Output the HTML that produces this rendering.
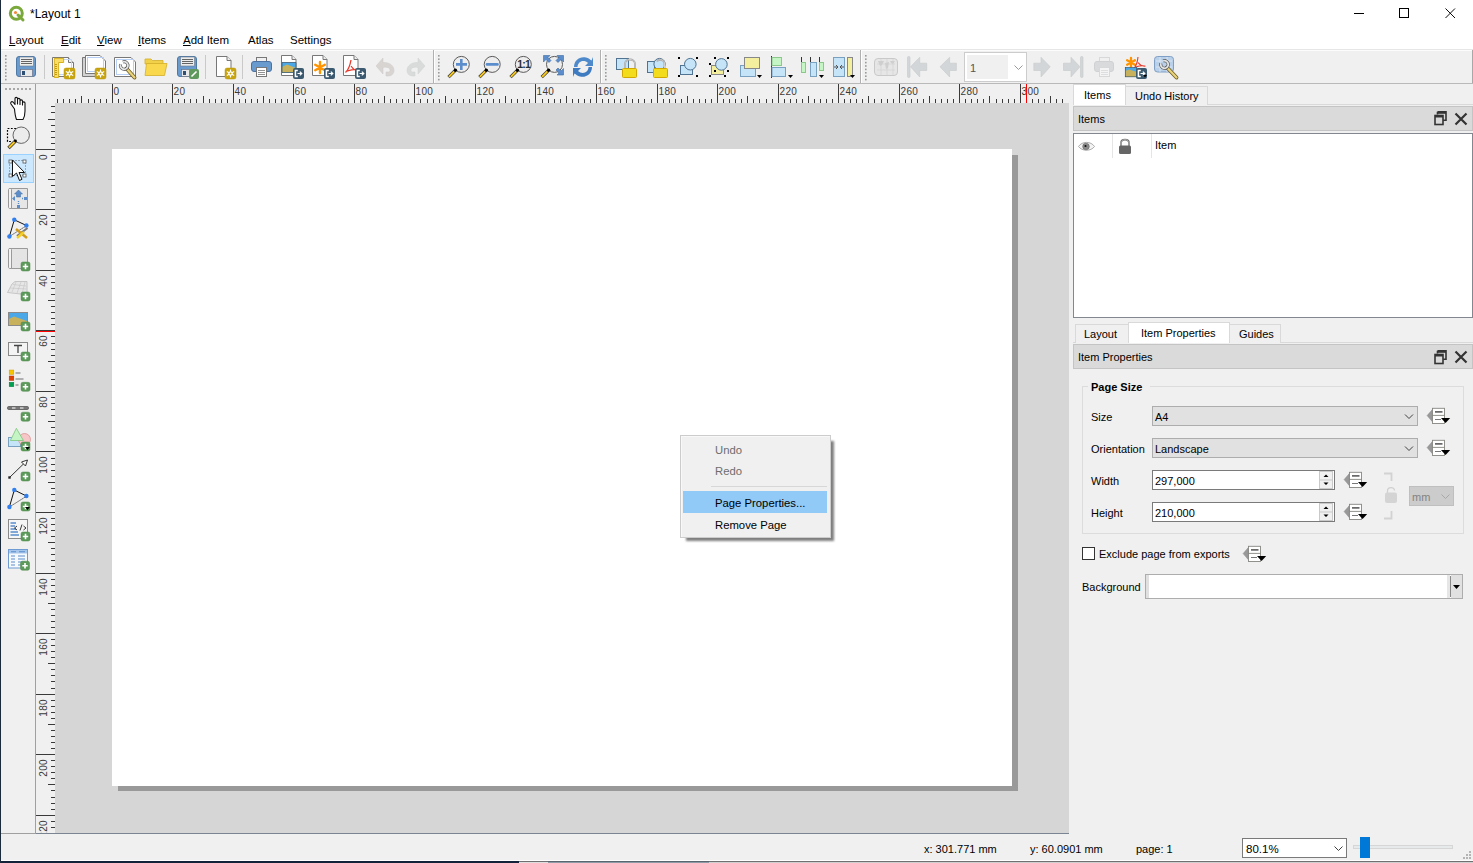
<!DOCTYPE html>
<html><head><meta charset="utf-8">
<style>
*{margin:0;padding:0;box-sizing:border-box}
html,body{width:1473px;height:863px;overflow:hidden;background:#f0f0f0;font-family:"Liberation Sans",sans-serif;font-size:11px;color:#000}
.a{position:absolute}
.t{position:absolute;white-space:pre;line-height:1}
svg{position:absolute;overflow:visible}
u{text-decoration:underline;text-underline-offset:1px}
</style></head><body>
<div class="a" style="left:0;top:0;width:1473px;height:49px;background:#fff"></div>
<div class="a" style="left:0;top:49px;width:1473px;height:1px;background:#e6e6e6"></div>
<div class="a" style="left:0;top:50px;width:1473px;height:1px;background:#fcfcfc"></div>
<div class="a" style="left:1472px;top:50px;width:1px;height:34px;background:#a8a8a8"></div>
<svg style="left:8px;top:5px" width="18" height="18" viewBox="0 0 18 18">
<circle cx="8.3" cy="8.3" r="6" fill="none" stroke="#7aa83a" stroke-width="3"/>
<path d="M10 10 L15 15" stroke="#7aa83a" stroke-width="3" stroke-linecap="round"/>
<circle cx="7.5" cy="7.5" r="1.6" fill="#f08a3b"/>
</svg>
<div class="t" style="left:30px;top:8px;font-size:12px">*Layout 1</div>
<div class="a" style="left:1354px;top:13px;width:10px;height:1px;background:#000"></div>
<div class="a" style="left:1399px;top:8px;width:10px;height:10px;border:1px solid #000"></div>
<svg style="left:1445px;top:8px" width="11" height="11" viewBox="0 0 11 11"><path d="M0.5 0.5L10 10M10 0.5L0.5 10" stroke="#000" stroke-width="0.95"/></svg>
<div class="t" style="left:9px;top:35px;font-size:11.5px"><u>L</u>ayout</div>
<div class="t" style="left:61px;top:35px;font-size:11.5px"><u>E</u>dit</div>
<div class="t" style="left:97px;top:35px;font-size:11.5px"><u>V</u>iew</div>
<div class="t" style="left:138px;top:35px;font-size:11.5px"><u>I</u>tems</div>
<div class="t" style="left:183px;top:35px;font-size:11.5px"><u>A</u>dd Item</div>
<div class="t" style="left:248px;top:35px;font-size:11.5px">Atlas</div>
<div class="t" style="left:290px;top:35px;font-size:11.5px">Settings</div>
<div class="a" style="left:0;top:83px;width:1473px;height:1px;background:#b9b9b9"></div>
<div class="a" style="left:35px;top:84px;width:1px;height:749px;background:#a0a0a0"></div>
<div class="a" style="left:1px;top:833px;width:35px;height:1px;background:#a0a0a0"></div>
<svg style="left:0;top:0" width="1473" height="863" viewBox="0 0 1473 863">
<rect x="36" y="84" width="1033" height="19" fill="#f0f0f0"/>
<rect x="36" y="103" width="19" height="730" fill="#f0f0f0"/>
<path d="M57.5 99V103M63.5 99V103M69.5 99V103M75.5 99V103M81.5 96V103M88.5 99V103M94.5 99V103M100.5 99V103M106.5 99V103M112.5 84V103M118.5 99V103M124.5 99V103M130.5 99V103M136.5 99V103M142.5 96V103M148.5 99V103M154.5 99V103M160.5 99V103M166.5 99V103M172.5 84V103M178.5 99V103M184.5 99V103M190.5 99V103M196.5 99V103M203.5 96V103M209.5 99V103M215.5 99V103M221.5 99V103M227.5 99V103M233.5 84V103M239.5 99V103M245.5 99V103M251.5 99V103M257.5 99V103M263.5 96V103M269.5 99V103M275.5 99V103M281.5 99V103M287.5 99V103M293.5 84V103M299.5 99V103M305.5 99V103M312.5 99V103M318.5 99V103M324.5 96V103M330.5 99V103M336.5 99V103M342.5 99V103M348.5 99V103M354.5 84V103M360.5 99V103M366.5 99V103M372.5 99V103M378.5 99V103M384.5 96V103M390.5 99V103M396.5 99V103M402.5 99V103M408.5 99V103M414.5 84V103M420.5 99V103M427.5 99V103M433.5 99V103M439.5 99V103M445.5 96V103M451.5 99V103M457.5 99V103M463.5 99V103M469.5 99V103M475.5 84V103M481.5 99V103M487.5 99V103M493.5 99V103M499.5 99V103M505.5 96V103M511.5 99V103M517.5 99V103M523.5 99V103M529.5 99V103M535.5 84V103M542.5 99V103M548.5 99V103M554.5 99V103M560.5 99V103M566.5 96V103M572.5 99V103M578.5 99V103M584.5 99V103M590.5 99V103M596.5 84V103M602.5 99V103M608.5 99V103M614.5 99V103M620.5 99V103M626.5 96V103M632.5 99V103M638.5 99V103M644.5 99V103M651.5 99V103M657.5 84V103M663.5 99V103M669.5 99V103M675.5 99V103M681.5 99V103M687.5 96V103M693.5 99V103M699.5 99V103M705.5 99V103M711.5 99V103M717.5 84V103M723.5 99V103M729.5 99V103M735.5 99V103M741.5 99V103M747.5 96V103M753.5 99V103M759.5 99V103M766.5 99V103M772.5 99V103M778.5 84V103M784.5 99V103M790.5 99V103M796.5 99V103M802.5 99V103M808.5 96V103M814.5 99V103M820.5 99V103M826.5 99V103M832.5 99V103M838.5 84V103M844.5 99V103M850.5 99V103M856.5 99V103M862.5 99V103M868.5 96V103M874.5 99V103M881.5 99V103M887.5 99V103M893.5 99V103M899.5 84V103M905.5 99V103M911.5 99V103M917.5 99V103M923.5 99V103M929.5 96V103M935.5 99V103M941.5 99V103M947.5 99V103M953.5 99V103M959.5 84V103M965.5 99V103M971.5 99V103M977.5 99V103M983.5 99V103M989.5 96V103M996.5 99V103M1002.5 99V103M1008.5 99V103M1014.5 99V103M1020.5 84V103M1026.5 99V103M1032.5 99V103M1038.5 99V103M1044.5 99V103M1050.5 96V103M1056.5 99V103M1062.5 99V103M51 106.5H55M51 112.5H55M48 119.5H55M51 125.5H55M51 131.5H55M51 137.5H55M51 143.5H55M36 149.5H55M51 155.5H55M51 161.5H55M51 167.5H55M51 173.5H55M48 179.5H55M51 185.5H55M51 191.5H55M51 197.5H55M51 203.5H55M36 209.5H55M51 215.5H55M51 221.5H55M51 227.5H55M51 234.5H55M48 240.5H55M51 246.5H55M51 252.5H55M51 258.5H55M51 264.5H55M36 270.5H55M51 276.5H55M51 282.5H55M51 288.5H55M51 294.5H55M48 300.5H55M51 306.5H55M51 312.5H55M51 318.5H55M51 324.5H55M36 330.5H55M51 336.5H55M51 343.5H55M51 349.5H55M51 355.5H55M48 361.5H55M51 367.5H55M51 373.5H55M51 379.5H55M51 385.5H55M36 391.5H55M51 397.5H55M51 403.5H55M51 409.5H55M51 415.5H55M48 421.5H55M51 427.5H55M51 433.5H55M51 439.5H55M51 445.5H55M36 451.5H55M51 458.5H55M51 464.5H55M51 470.5H55M51 476.5H55M48 482.5H55M51 488.5H55M51 494.5H55M51 500.5H55M51 506.5H55M36 512.5H55M51 518.5H55M51 524.5H55M51 530.5H55M51 536.5H55M48 542.5H55M51 548.5H55M51 554.5H55M51 560.5H55M51 566.5H55M36 573.5H55M51 579.5H55M51 585.5H55M51 591.5H55M51 597.5H55M48 603.5H55M51 609.5H55M51 615.5H55M51 621.5H55M51 627.5H55M36 633.5H55M51 639.5H55M51 645.5H55M51 651.5H55M51 657.5H55M48 663.5H55M51 669.5H55M51 675.5H55M51 681.5H55M51 688.5H55M36 694.5H55M51 700.5H55M51 706.5H55M51 712.5H55M51 718.5H55M48 724.5H55M51 730.5H55M51 736.5H55M51 742.5H55M51 748.5H55M36 754.5H55M51 760.5H55M51 766.5H55M51 772.5H55M51 778.5H55M48 784.5H55M51 790.5H55M51 797.5H55M51 803.5H55M51 809.5H55M36 815.5H55M51 821.5H55M51 827.5H55" stroke="#3a3a3a" stroke-width="1"/>
<clipPath id="vrc"><rect x="36" y="103" width="19" height="730"/></clipPath>
<g font-family="Liberation Sans" font-size="10" fill="#3a3a3a" letter-spacing="0.35"><text x="113.5" y="95">0</text><text x="173.5" y="95">20</text><text x="234.5" y="95">40</text><text x="294.5" y="95">60</text><text x="355.5" y="95">80</text><text x="415.5" y="95">100</text><text x="476.5" y="95">120</text><text x="536.5" y="95">140</text><text x="597.5" y="95">160</text><text x="658.5" y="95">180</text><text x="718.5" y="95">200</text><text x="779.5" y="95">220</text><text x="839.5" y="95">240</text><text x="900.5" y="95">260</text><text x="960.5" y="95">280</text><text x="1021.5" y="95">300</text></g>
<g font-family="Liberation Sans" font-size="10" fill="#3a3a3a" letter-spacing="0.35" clip-path="url(#vrc)"><text transform="translate(47 154) rotate(-90)" text-anchor="end">0</text><text transform="translate(47 214) rotate(-90)" text-anchor="end">20</text><text transform="translate(47 275) rotate(-90)" text-anchor="end">40</text><text transform="translate(47 335) rotate(-90)" text-anchor="end">60</text><text transform="translate(47 396) rotate(-90)" text-anchor="end">80</text><text transform="translate(47 456) rotate(-90)" text-anchor="end">100</text><text transform="translate(47 517) rotate(-90)" text-anchor="end">120</text><text transform="translate(47 578) rotate(-90)" text-anchor="end">140</text><text transform="translate(47 638) rotate(-90)" text-anchor="end">160</text><text transform="translate(47 699) rotate(-90)" text-anchor="end">180</text><text transform="translate(47 759) rotate(-90)" text-anchor="end">200</text><text transform="translate(47 820) rotate(-90)" text-anchor="end">220</text></g>
<path d="M1026.5 84V103M36 331.5H55" stroke="#ff0000" stroke-width="1"/>
</svg><div class="a" style="left:55px;top:103px;width:1014px;height:730px;background:#d6d6d6;overflow:hidden">
  <div class="a" style="left:63px;top:52px;width:900px;height:636px;background:#999"></div>
  <div class="a" style="left:57px;top:46px;width:900px;height:637px;background:#fff"></div>
</div>
<div class="a" style="left:36px;top:833px;width:1033px;height:1px;background:#7a8594"></div>
<!-- context menu -->
<div class="a" style="left:686px;top:441px;width:148px;height:100px;background:rgba(0,0,0,0.5);filter:blur(1.3px)"></div>
<div class="a" style="left:680px;top:435px;width:151px;height:103px;background:#f0f0f0;border:1px solid #cccccc;box-shadow:inset 1px 1px 0 #f8f8f8"></div>
<div class="a" style="left:711px;top:486px;width:116px;height:1px;background:#d7d7d7"></div>
<div class="a" style="left:683px;top:491px;width:144px;height:22px;background:#91c9f7"></div>
<div class="t" style="left:715px;top:445px;color:#6d6d6d;font-size:11.3px">Undo</div>
<div class="t" style="left:715px;top:466px;color:#6d6d6d;font-size:11.3px">Redo</div>
<div class="t" style="left:715px;top:498px;font-size:11.3px">Page Properties...</div>
<div class="t" style="left:715px;top:520px;font-size:11.3px">Remove Page</div>
<svg style="left:0;top:0" width="1473" height="90" viewBox="0 0 1473 90">

<!-- handles -->
<g fill="#9a9a9a"><rect x="5" y="55.0" width="1.6" height="1.6"/><rect x="5" y="58.4" width="1.6" height="1.6"/><rect x="5" y="61.8" width="1.6" height="1.6"/><rect x="5" y="65.2" width="1.6" height="1.6"/><rect x="5" y="68.6" width="1.6" height="1.6"/><rect x="5" y="72.0" width="1.6" height="1.6"/><rect x="5" y="75.4" width="1.6" height="1.6"/><rect x="5" y="78.8" width="1.6" height="1.6"/><rect x="438" y="55.0" width="1.6" height="1.6"/><rect x="438" y="58.4" width="1.6" height="1.6"/><rect x="438" y="61.8" width="1.6" height="1.6"/><rect x="438" y="65.2" width="1.6" height="1.6"/><rect x="438" y="68.6" width="1.6" height="1.6"/><rect x="438" y="72.0" width="1.6" height="1.6"/><rect x="438" y="75.4" width="1.6" height="1.6"/><rect x="438" y="78.8" width="1.6" height="1.6"/><rect x="605" y="55.0" width="1.6" height="1.6"/><rect x="605" y="58.4" width="1.6" height="1.6"/><rect x="605" y="61.8" width="1.6" height="1.6"/><rect x="605" y="65.2" width="1.6" height="1.6"/><rect x="605" y="68.6" width="1.6" height="1.6"/><rect x="605" y="72.0" width="1.6" height="1.6"/><rect x="605" y="75.4" width="1.6" height="1.6"/><rect x="605" y="78.8" width="1.6" height="1.6"/><rect x="865" y="55.0" width="1.6" height="1.6"/><rect x="865" y="58.4" width="1.6" height="1.6"/><rect x="865" y="61.8" width="1.6" height="1.6"/><rect x="865" y="65.2" width="1.6" height="1.6"/><rect x="865" y="68.6" width="1.6" height="1.6"/><rect x="865" y="72.0" width="1.6" height="1.6"/><rect x="865" y="75.4" width="1.6" height="1.6"/><rect x="865" y="78.8" width="1.6" height="1.6"/></g>
<!-- separators / toolbar ends -->
<path d="M44.5 55V79M205.5 55V79M242.5 55V79" stroke="#c9c9c9"/>
<path d="M433.5 50V83M600.5 50V83M860.5 50V83" stroke="#b0b0b0"/>
<path d="M434.5 50V83M601.5 50V83M861.5 50V83" stroke="#fff"/>

<!-- save -->
<rect x="16.5" y="56.5" width="19" height="20" rx="2.5" fill="#6a9bcf" stroke="#4f7aa6"/>
<rect x="19.5" y="57" width="14" height="9" fill="#ececec" stroke="#6a7a8a" stroke-width="0.6"/>
<path d="M21 59.5H32M21 61.5H32M21 63.5H32" stroke="#555" stroke-width="0.9"/>
<rect x="20.5" y="69.5" width="12" height="7" fill="#e8e8e8" stroke="#667" stroke-width="0.6"/>
<rect x="22" y="71" width="3" height="4" fill="#2f4f74"/>

<!-- new layout -->
<path d="M52.5 57.5H68.5L73.5 62.5V76.5H52.5Z" fill="#fff" stroke="#777"/>
<path d="M68.5 57.5V62.5H73.5" fill="#eee" stroke="#777"/>
<path d="M63 59.5H71.5V74.5H59" fill="none" stroke="#c0d4f5"/>
<path d="M54.3 58.3H63.6V62.5H58.6V77.5H54.3Z" fill="#f8dc64" stroke="#d2a90e" stroke-width="0.9"/>
<path d="M55 64.5H57M55 66.5H57M55 68.5H57M55 70.5H57M55 72.5H57M55 74.5H57" stroke="#b08a00" stroke-width="0.8"/>
<g transform="translate(64 68)"><rect x="0" y="0" width="11" height="11" rx="2" fill="#c8a40e" stroke="#b8940a" stroke-width="0.5"/><path d="M5.5 1.5V9.5M1.8 3.5L9.2 7.5M1.8 7.5L9.2 3.5" stroke="#fff" stroke-width="1.1"/><circle cx="5.5" cy="5.5" r="2.2" fill="#fff"/><circle cx="5.5" cy="5.5" r="1" fill="#c8a40e"/></g>

<!-- duplicate -->
<path d="M82.5 57.5H100V76.5H82.5Z" fill="#d2d2d2" stroke="#777"/>
<path d="M85.5 55.5H100L105.5 61V73.5H85.5Z" fill="#fff" stroke="#777"/>
<rect x="87.5" y="57.5" width="16" height="14" fill="none" stroke="#b8cff5" stroke-width="1"/>
<g transform="translate(95 68)"><rect x="0" y="0" width="11" height="11" rx="2" fill="#c8a40e" stroke="#b8940a" stroke-width="0.5"/><path d="M5.5 1.5V9.5M1.8 3.5L9.2 7.5M1.8 7.5L9.2 3.5" stroke="#fff" stroke-width="1.1"/><circle cx="5.5" cy="5.5" r="2.2" fill="#fff"/><circle cx="5.5" cy="5.5" r="1" fill="#c8a40e"/></g>

<!-- layout manager -->
<path d="M114.5 57.5H131L135.5 62V76.5H114.5Z" fill="#fff" stroke="#777"/>
<rect x="116.5" y="59.5" width="17" height="15" fill="none" stroke="#b8cff5"/>
<path d="M126.5 68.5L134.5 77.5" stroke="#6b5a20" stroke-width="3.8" stroke-linecap="round"/>
<path d="M126.5 68.5L134.5 77.5" stroke="#e8d27a" stroke-width="2.3" stroke-linecap="round"/>
<path d="M122.9 61.9A3.8 3.8 0 1 1 120.6 64.2" fill="none" stroke="#555" stroke-width="3.2"/>
<path d="M122.9 61.9A3.8 3.8 0 1 1 120.6 64.2" fill="none" stroke="#e4e4e4" stroke-width="1.8"/>

<!-- open folder -->
<path d="M145 59H151L152.5 60.5H163V64H145Z" fill="#f2d14a" stroke="#d4ae2a" stroke-width="0.8"/>
<path d="M145 75.5L146.5 63.5H167L164.5 75.5Z" fill="#f9d84e" stroke="#d4ae2a" stroke-width="0.8"/>

<!-- save as template -->
<rect x="177.5" y="56.5" width="19" height="20" rx="2.5" fill="#6a9bcf" stroke="#4f7aa6"/>
<rect x="180.5" y="57" width="14" height="9" fill="#ececec" stroke="#6a7a8a" stroke-width="0.6"/>
<path d="M182 59.5H193M182 61.5H193M182 63.5H193" stroke="#555" stroke-width="0.9"/>
<rect x="181.5" y="69.5" width="12" height="7" fill="#e8e8e8" stroke="#667" stroke-width="0.6"/>
<rect x="183" y="71" width="3" height="4" fill="#2f4f74"/>
<rect x="189" y="69" width="10" height="10" rx="2" fill="#5f9a5c"/>
<path d="M191.5 76.5L196.5 71.5" stroke="#fff" stroke-width="1.6"/>

<!-- new page -->
<g transform="translate(216 56)"><path d="M0.5 0.5H11L15 4.5V20.5H0.5Z" fill="#fff" stroke="#777" stroke-width="1"/><path d="M11 0.5V4.5H15" fill="#eee" stroke="#777" stroke-width="1"/></g>
<g transform="translate(225 68)"><rect x="0" y="0" width="11" height="11" rx="2" fill="#c8a40e" stroke="#b8940a" stroke-width="0.5"/><path d="M5.5 1.5V9.5M1.8 3.5L9.2 7.5M1.8 7.5L9.2 3.5" stroke="#fff" stroke-width="1.1"/><circle cx="5.5" cy="5.5" r="2.2" fill="#fff"/><circle cx="5.5" cy="5.5" r="1" fill="#c8a40e"/></g>

<!-- print -->
<rect x="256.5" y="57.5" width="10" height="6" fill="#f0f0f0" stroke="#777"/>
<rect x="251.5" y="61.5" width="20" height="10" rx="2.5" fill="#6a9bcf" stroke="#4b72a0"/>
<rect x="256.5" y="67.5" width="10" height="9" fill="#fff" stroke="#777"/>
<path d="M258 70.5H265M258 72.5H265M258 74.5H265" stroke="#777" stroke-width="0.8"/>

<!-- export image -->
<g transform="translate(281 55)"><path d="M0.5 0.5H11L15 4.5V20.5H0.5Z" fill="#fff" stroke="#777" stroke-width="1"/><path d="M11 0.5V4.5H15" fill="#eee" stroke="#777" stroke-width="1"/></g>
<rect x="282" y="62.5" width="14" height="10" fill="#4aa8e8"/>
<path d="M282 67L287 64.5L296 68V72.5H282Z" fill="#c7b15c"/>
<path d="M282 62.5H296V72.5H282Z" fill="none" stroke="#3b5a70" stroke-width="0.8"/>
<g transform="translate(293 68)"><rect x="0" y="0" width="11" height="11" rx="2" fill="#3b5a70"/><path d="M4.8 2.6H2.4V8.4H4.8" fill="none" stroke="#fff" stroke-width="1.5"/><path d="M4.5 5.5H8.6M6.8 3.6L8.8 5.5L6.8 7.4" fill="none" stroke="#fff" stroke-width="1.2"/></g>
<!-- export svg -->
<g transform="translate(312 55)"><path d="M0.5 0.5H11L15 4.5V20.5H0.5Z" fill="#fff" stroke="#777" stroke-width="1"/><path d="M11 0.5V4.5H15" fill="#eee" stroke="#777" stroke-width="1"/></g>
<path d="M320 62V73M315.2 64.75L324.8 70.25M315.2 70.25L324.8 64.75" stroke="#ff9400" stroke-width="2.4" stroke-linecap="round"/>
<g transform="translate(324 68)"><rect x="0" y="0" width="11" height="11" rx="2" fill="#3b5a70"/><path d="M4.8 2.6H2.4V8.4H4.8" fill="none" stroke="#fff" stroke-width="1.5"/><path d="M4.5 5.5H8.6M6.8 3.6L8.8 5.5L6.8 7.4" fill="none" stroke="#fff" stroke-width="1.2"/></g>
<!-- export pdf -->
<g transform="translate(343 55)"><path d="M0.5 0.5H11L15 4.5V20.5H0.5Z" fill="#fff" stroke="#777" stroke-width="1"/><path d="M11 0.5V4.5H15" fill="#eee" stroke="#777" stroke-width="1"/></g>
<path d="M351 60C350 66 348 70 345.5 72.5M351 66C353 69 356 71 359 71M347 71C351 70 354 69 356 70" fill="none" stroke="#e8392c" stroke-width="1.3"/>
<g transform="translate(355 68)"><rect x="0" y="0" width="11" height="11" rx="2" fill="#3b5a70"/><path d="M4.8 2.6H2.4V8.4H4.8" fill="none" stroke="#fff" stroke-width="1.5"/><path d="M4.5 5.5H8.6M6.8 3.6L8.8 5.5L6.8 7.4" fill="none" stroke="#fff" stroke-width="1.2"/></g>

<!-- undo / redo -->
<path d="M376 66L383 58V62.5C390 62 394 66 394 70.5C394 74 391.5 76 388 76H386V72H388C389.5 72 390 71 390 70.2C390 68 387 66.5 383 67.5V74Z" fill="#d7d4d2" stroke="#cfcac8" stroke-width="0.5"/>
<path d="M425 66L418 58V62.5C411 62 407 66 407 70.5C407 74 409.5 76 413 76H415V72H413C411.5 72 411 71 411 70.2C411 68 414 66.5 418 67.5V74Z" fill="#d8dbd9" stroke="#cfd2d0" stroke-width="0.5"/>

<!-- zoom in/out/1:1 -->
<g transform="translate(461.3 64.4)"><circle cx="0" cy="0" r="8" fill="#ededed" stroke="#5a5a5a" stroke-width="1"/><path d="M-6.5 6.5L-12.8 12.8" stroke="#3a3a3a" stroke-width="3.2" stroke-linecap="butt"/><path d="M-6.8 6.8L-12.4 12.4" stroke="#f9c91c" stroke-width="1.9"/><circle cx="-5.9" cy="5.9" r="1.7" fill="#000"/></g>
<path d="M456 64.4H467M461.3 59V70" stroke="#5b8dcc" stroke-width="2.6"/>
<g transform="translate(492.2 64.4)"><circle cx="0" cy="0" r="8" fill="#ededed" stroke="#5a5a5a" stroke-width="1"/><path d="M-6.5 6.5L-12.8 12.8" stroke="#3a3a3a" stroke-width="3.2" stroke-linecap="butt"/><path d="M-6.8 6.8L-12.4 12.4" stroke="#f9c91c" stroke-width="1.9"/><circle cx="-5.9" cy="5.9" r="1.7" fill="#000"/></g>
<path d="M487 64.4H497.5" stroke="#5b8dcc" stroke-width="2.6" stroke-linecap="round"/>
<g transform="translate(523.3 64.4)"><circle cx="0" cy="0" r="8" fill="#ededed" stroke="#5a5a5a" stroke-width="1"/><path d="M-6.5 6.5L-12.8 12.8" stroke="#3a3a3a" stroke-width="3.2" stroke-linecap="butt"/><path d="M-6.8 6.8L-12.4 12.4" stroke="#f9c91c" stroke-width="1.9"/><circle cx="-5.9" cy="5.9" r="1.7" fill="#000"/></g>
<text x="523.6" y="68.3" font-family="Liberation Sans" font-weight="bold" font-size="10.5" text-anchor="middle" fill="#2a2f33" letter-spacing="-0.8">1:1</text>
<!-- zoom full -->
<g transform="translate(554.5 64.4)"><circle cx="0" cy="0" r="8" fill="#ededed" stroke="#5a5a5a" stroke-width="1"/><path d="M-6.5 6.5L-12.8 12.8" stroke="#3a3a3a" stroke-width="3.2" stroke-linecap="butt"/><path d="M-6.8 6.8L-12.4 12.4" stroke="#f9c91c" stroke-width="1.9"/><circle cx="-5.9" cy="5.9" r="1.7" fill="#000"/></g>
<path d="M543.5 55.5H550L548 57.5L551 60.5L549 62.5L546 59.5L543.5 62Z M563.5 55.5H557L559 57.5L556 60.5L558 62.5L561 59.5L563.5 62Z M563.5 75H557L559 73L556 70L558 68L561 71L563.5 68.5Z" fill="#5b8dcc" stroke="#3d6a9e" stroke-width="0.6"/>
<!-- refresh -->
<path d="M574 67C574 60 580 56 586 57.5C588.5 58 590 59.5 591.5 60.5L593 57V66H585L588 63C586 61 583 60.5 581 61.5C578.5 62.5 577.5 65 577.5 67Z" fill="#4e8acb"/>
<path d="M592 67C592 74 586 78 580 76.5C577.5 76 576 74.5 574.5 73.5L573 77V68H581L578 71C580 73 583 73.5 585 72.5C587.5 71.5 588.5 69 588.5 67Z" fill="#3f7bc0"/>

<!-- lock -->
<rect x="616.5" y="58.5" width="12" height="11" fill="#c6e4f8" stroke="#4f7391"/>
<path d="M625 68.5V64C625 58 635 58 635 64V68.5" fill="none" stroke="#999" stroke-width="1.8"/>
<path d="M625 68.5V64C625 58 635 58 635 64V68.5" fill="none" stroke="#ddd" stroke-width="0.8"/>
<rect x="622.5" y="68.5" width="14" height="9" rx="1" fill="#f2dc1c" stroke="#d2a800"/>
<!-- unlock -->
<rect x="647.5" y="61.5" width="7" height="11" fill="#c6e4f8" stroke="#4f7391"/>
<circle cx="659.5" cy="64" r="5.6" fill="#c6e4f8" stroke="#4f7391"/>
<path d="M657 61.5C658 59 664 59 664.5 63V68.5" fill="none" stroke="#999" stroke-width="1.8"/>
<path d="M657 61.5C658 59 664 59 664.5 63V68.5" fill="none" stroke="#ddd" stroke-width="0.8"/>
<rect x="653.5" y="68.5" width="14" height="9" rx="1" fill="#f2dc1c" stroke="#d2a800"/>
<!-- group -->
<rect x="680.5" y="65.5" width="12" height="9" fill="#c6e4f8" stroke="#4f7391"/>
<circle cx="690.3" cy="64.2" r="5.8" fill="#c6e4f8" stroke="#4f7391"/>
<g fill="#000"><rect x="678" y="57" width="2" height="2"/><rect x="696" y="57" width="2" height="2"/><rect x="678" y="75" width="2" height="2"/><rect x="696" y="75" width="2" height="2"/></g>
<!-- ungroup -->
<rect x="711.5" y="65.5" width="12" height="9" fill="#f3ef9f" stroke="#888"/>
<circle cx="721.4" cy="64.4" r="5.8" fill="#c6e4f8" stroke="#4f7391"/>
<g fill="#000"><rect x="714" y="57" width="2" height="2"/><rect x="727" y="57" width="2" height="2"/><rect x="709" y="63" width="2" height="2"/><rect x="714" y="70" width="2" height="2"/><rect x="727" y="70" width="2" height="2"/><rect x="709" y="75" width="2" height="2"/><rect x="724" y="75" width="2" height="2"/></g>
<!-- raise -->
<rect x="740.5" y="65.5" width="15" height="11" fill="#c6e4f8" stroke="#7aa0bf"/>
<rect x="744.5" y="57.5" width="15" height="11" fill="#f3ef9f" stroke="#888"/>
<g transform="translate(757 75)"><path d="M0 0H5L2.5 3Z" fill="#000"/></g>
<!-- align -->
<path d="M771.5 56V78" stroke="#333"/>
<rect x="772" y="57.5" width="9.5" height="8" fill="#c5f5c5" stroke="#8cc88c"/>
<rect x="772" y="67.5" width="13.5" height="9" fill="#c6e4f8" stroke="#7aa0bf"/>
<g transform="translate(788 75)"><path d="M0 0H5L2.5 3Z" fill="#000"/></g>
<!-- distribute -->
<path d="M801.5 57V65M810.5 57V65M819.5 57V65" stroke="#333"/>
<rect x="801.5" y="62.5" width="4" height="10" fill="#c5f5c5" stroke="#8cc88c"/>
<rect x="810.5" y="62.5" width="6" height="14" fill="#c6e4f8" stroke="#7aa0bf"/>
<rect x="819.5" y="62.5" width="4" height="8" fill="#c5f5c5" stroke="#8cc88c"/>
<g transform="translate(819 75)"><path d="M0 0H5L2.5 3Z" fill="#000"/></g>
<!-- resize -->
<rect x="833.5" y="57.5" width="11" height="19" fill="#c6e4f8" stroke="#7aa0bf"/>
<path d="M834 67H837M836 65L838 67L836 69M844 67H841M842 65L840 67L842 69" fill="none" stroke="#555" stroke-width="1"/>
<rect x="847.5" y="57.5" width="5" height="19" fill="#f3ef9f" stroke="#888"/>
<g transform="translate(850 75)"><path d="M0 0H5L2.5 3Z" fill="#000"/></g>

<!-- atlas preview -->
<rect x="874.5" y="58.5" width="23" height="17" rx="3.5" fill="#e6e6e6" stroke="#c9c9c9"/>
<path d="M877 64H895M877 70H895M881 59V75M887 59V75M893 59V75" stroke="#d2d2d2" stroke-width="0.6"/>
<path d="M878 61H884L882 65L880 66ZM885 63L889 62L888 68L886 69ZM890 61H895L893 64L891 63Z" fill="#cfcfcf"/>
<!-- first -->
<rect x="907.5" y="56.5" width="2.5" height="21" rx="1" fill="#d3d6d8" stroke="#c6c9cb" stroke-width="0.6"/>
<path d="M910.5 66.8L919.7 57.3V63.2H926.7V70.5H919.7V76.9Z" fill="#d3d6d8" stroke="#c6c9cb" stroke-width="0.6"/>
<!-- prev -->
<path d="M940 66.8L949.6 57.3V63.2H956.4V70.5H949.6V76.9Z" fill="#d3d6d8" stroke="#c6c9cb" stroke-width="0.6"/>
<!-- combo -->
<rect x="964.5" y="52.5" width="62" height="29" fill="#fff" stroke="#cccccc"/>
<rect x="967" y="55" width="41" height="24" fill="#f0f0f0"/>
<text x="970" y="71.5" font-family="Liberation Sans" font-size="11" fill="#555">1</text>
<path d="M1014.5 65.5L1018.5 69.5L1022.5 65.5" fill="none" stroke="#9a9a9a"/>
<!-- next / last -->
<path d="M1050.2 66.8L1041 57.3V63.2H1033.8V70.5H1041V76.9Z" fill="#d3d6d8" stroke="#c6c9cb" stroke-width="0.6"/>
<path d="M1080 66.8L1071 57.3V63.2H1063.5V70.5H1071V76.9Z" fill="#d3d6d8" stroke="#c6c9cb" stroke-width="0.6"/>
<rect x="1080.5" y="56.5" width="2.5" height="21" rx="1" fill="#d3d6d8" stroke="#c6c9cb" stroke-width="0.6"/>
<!-- atlas print -->
<rect x="1099.5" y="57.5" width="10" height="6" fill="#f0f0f0" stroke="#d6d8da"/>
<rect x="1094.5" y="61.5" width="19" height="10" rx="2.5" fill="#d9dadb" stroke="#cfd1d3"/>
<rect x="1099.5" y="67.5" width="10" height="9" fill="#f4f4f4" stroke="#d6d8da"/>
<path d="M1101 70.5H1108M1101 72.5H1108M1101 74.5H1108" stroke="#d6d8da" stroke-width="0.8"/>
<!-- atlas export -->
<path d="M1131 58V67M1127.1 60.25L1134.9 64.75M1127.1 64.75L1134.9 60.25" stroke="#ff9400" stroke-width="2.3" stroke-linecap="round"/>
<path d="M1138 57C1137.5 62 1136 66 1134 68.5M1138 62.5C1140 65 1143 66.5 1145.5 66M1135.5 67C1139 66 1142 65.5 1144 66" fill="none" stroke="#e8392c" stroke-width="1.1"/>
<rect x="1125" y="67.5" width="12" height="9.5" fill="#4aa8e8"/>
<path d="M1125 71L1129 69.5L1137 72V77H1125Z" fill="#c7b15c"/>
<rect x="1125.3" y="67.5" width="11.5" height="9.3" fill="none" stroke="#3b5a70" stroke-width="0.7"/>
<g transform="translate(1136 68)"><rect x="0" y="0" width="11" height="11" rx="2" fill="#3b5a70"/><path d="M4.8 2.6H2.4V8.4H4.8" fill="none" stroke="#fff" stroke-width="1.5"/><path d="M4.5 5.5H8.6M6.8 3.6L8.8 5.5L6.8 7.4" fill="none" stroke="#fff" stroke-width="1.2"/></g>
<path d="M1143 75H1147L1145 77.5Z" fill="#000"/>
<!-- atlas settings -->
<rect x="1154.5" y="56.5" width="19" height="15.5" rx="3" fill="#b9d0ea" stroke="#7f9fc4"/>
<path d="M1156 61H1172M1156 67H1172M1160 57V72M1167 57V72" stroke="#e0ebf7" stroke-width="0.8"/>
<path d="M1167 67.5L1176.5 77.5" stroke="#6b5a20" stroke-width="3.8" stroke-linecap="round"/>
<path d="M1167 67.5L1176.5 77.5" stroke="#e8d27a" stroke-width="2.3" stroke-linecap="round"/>
<path d="M1163.2 60.9A3.8 3.8 0 1 1 1160.9 63.2" fill="none" stroke="#555" stroke-width="3.2"/>
<path d="M1163.2 60.9A3.8 3.8 0 1 1 1160.9 63.2" fill="none" stroke="#e4e4e4" stroke-width="1.8"/>
</svg>
<div class="a" style="left:3px;top:154px;width:31px;height:29px;background:#cce8ff;border:1px solid #99d1ff"></div>
<svg style="left:0;top:0" width="40" height="600" viewBox="0 0 40 600">

<g fill="#a8a8a8"><rect x="5" y="88" width="2" height="2"/><rect x="9" y="88" width="2" height="2"/><rect x="13" y="88" width="2" height="2"/><rect x="17" y="88" width="2" height="2"/><rect x="21" y="88" width="2" height="2"/><rect x="25" y="88" width="2" height="2"/><rect x="29" y="88" width="2" height="2"/></g>
<!-- hand -->
<path d="M14.5 109L11 104C10 102.5 11.5 101 13 102L15 104.5V98.5C15 97 17.5 97 17.5 98.5V104V99.5C17.5 98 20 98 20 99.5V104.5V101C20 99.5 22.5 99.5 22.5 101V105V103C22.5 101.5 25 101.5 25 103V111C25 114 24.5 117 23 119.5H16.5C15.5 117 15 115 14.5 109Z" fill="#fff" stroke="#111" stroke-width="1.1" stroke-linejoin="round"/>
<!-- zoom -->
<path d="M16 128.5H7.5V141.5H12" fill="none" stroke="#000" stroke-width="1.2" stroke-dasharray="1.8 1.5"/>
<circle cx="21.2" cy="135.2" r="8.2" fill="#ececec" stroke="#666" stroke-width="1"/>
<path d="M15.5 141L8.5 148" stroke="#333" stroke-width="3.4"/>
<path d="M15 141.5L9 147.5" stroke="#f7c61a" stroke-width="1.9"/>
<circle cx="15.5" cy="141" r="1.4" fill="#000"/>
<!-- select -->
<rect x="9.5" y="160.5" width="16" height="15" fill="none" stroke="#444" stroke-dasharray="1 2" stroke-width="0.8"/>
<rect x="9" y="160" width="3" height="3" fill="#fff" stroke="#555" stroke-width="0.8"/><rect x="23" y="160" width="3" height="3" fill="#fff" stroke="#555" stroke-width="0.8"/><rect x="9" y="174" width="3" height="3" fill="#fff" stroke="#555" stroke-width="0.8"/><rect x="23" y="174" width="3" height="3" fill="#fff" stroke="#555" stroke-width="0.8"/>
<path d="M12.5 160V176.5L16.5 173L19.5 180.5L22 179.3L19 172.5H24.5Z" fill="#fff" stroke="#111" stroke-width="1" stroke-linejoin="round"/>
<!-- move content -->
<path d="M10.5 188.5H27.5V208.5H10.5Z" fill="#e6e6e6" stroke="#999"/>
<path d="M8.5 189.5C8.5 188 11.5 188 11.5 189.5V208.5H10C9 208.5 8.5 208 8.5 207Z" fill="#f4f4f4" stroke="#999"/>
<path d="M18.5 190L22.5 194H20.5V197H16.5V194H14.5Z" fill="#5b8dcc" stroke="#3d6a9e" stroke-width="0.5"/>
<path d="M12 198.5L15 196V201L12 198.5Z" fill="#5b8dcc"/><rect x="24" y="197" width="3" height="3" fill="#5b8dcc"/><rect x="17" y="205" width="3" height="3" fill="#5b8dcc"/>
<path d="M13 199H15M22 198.5H24M18.5 201V204" stroke="#5b8dcc" stroke-width="1.4" stroke-dasharray="1 1"/>
<!-- edit nodes -->
<path d="M14.3 219.8L26.4 225.5M14.3 219.8L9.4 236.5" stroke="#111" stroke-width="1"/>
<path d="M9.4 236.5L26 226" stroke="#111" stroke-width="1" stroke-dasharray="1.2 1.2"/>
<path d="M17 236L27.5 228" stroke="#777" stroke-width="2.2"/>
<path d="M16 229L27 238" stroke="#d19b1a" stroke-width="2.5"/>
<path d="M17 238L24 232" stroke="#f2cf2a" stroke-width="2.4"/>
<circle cx="14.3" cy="219.8" r="2.2" fill="#2f7ff0"/><circle cx="26.4" cy="225.5" r="2.2" fill="#2f7ff0"/><circle cx="9.4" cy="236.5" r="2.2" fill="#2f7ff0"/>
<!-- add map -->
<path d="M10.5 248.5H27.5V268.5H10.5Z" fill="#e4e4e4" stroke="#9a9a9a"/>
<path d="M8.5 249.5C8.5 248 11.5 248 11.5 249.5V268.5H10C9 268.5 8.5 268 8.5 267Z" fill="#f4f4f4" stroke="#9a9a9a"/>
<g transform="translate(21 262)"><rect x="0" y="0" width="9" height="9" rx="1.8" fill="#5c9a5a" stroke="#4d874b" stroke-width="0.5"/><path d="M4.5 1.8V7.2M1.8 4.5H7.2" stroke="#fff" stroke-width="1.6"/></g>
<!-- add 3d map -->
<path d="M7.5 292.5L12 284L15 281.5H27V293L25 294.5Z" fill="#e6e6e6" stroke="#bdbdbd" stroke-width="0.8"/>
<path d="M10 288L26 289M13 284.5L26 286M12 292L16 282M17 293L21 282M22 294L25 282" stroke="#c4c4c4" stroke-width="0.6"/>
<g transform="translate(21 292)"><rect x="0" y="0" width="9" height="9" rx="1.8" fill="#5c9a5a" stroke="#4d874b" stroke-width="0.5"/><path d="M4.5 1.8V7.2M1.8 4.5H7.2" stroke="#fff" stroke-width="1.6"/></g>
<!-- add picture -->
<rect x="8.5" y="312.5" width="19" height="13" fill="#4aa8e8" stroke="#8a8a8a"/>
<path d="M9 319L14 316.5L27 321V325H9Z" fill="#c7b15c"/>
<g transform="translate(21 322)"><rect x="0" y="0" width="9" height="9" rx="1.8" fill="#5c9a5a" stroke="#4d874b" stroke-width="0.5"/><path d="M4.5 1.8V7.2M1.8 4.5H7.2" stroke="#fff" stroke-width="1.6"/></g>
<!-- add label -->
<rect x="8.5" y="342.5" width="19" height="13" fill="#f4f4f4" stroke="#888"/>
<path d="M14 345.5H22M18 345.5V353" stroke="#444" stroke-width="1.3"/>
<g transform="translate(21 352)"><rect x="0" y="0" width="9" height="9" rx="1.8" fill="#5c9a5a" stroke="#4d874b" stroke-width="0.5"/><path d="M4.5 1.8V7.2M1.8 4.5H7.2" stroke="#fff" stroke-width="1.6"/></g>
<!-- legend -->
<rect x="9.2" y="370" width="4.6" height="4.4" fill="#f7c400" stroke="#d19a00" stroke-width="0.5"/>
<rect x="9.2" y="376" width="4.6" height="4.4" fill="#e04000" stroke="#b03000" stroke-width="0.5"/>
<rect x="9.2" y="382.3" width="4.6" height="4.4" fill="#00a050" stroke="#007a3a" stroke-width="0.5"/>
<path d="M15.5 373H20.5M15.5 379H23.5M15.5 385H18.5" stroke="#999" stroke-width="1.3"/>
<g transform="translate(21 382.3)"><rect x="0" y="0" width="9" height="9" rx="1.8" fill="#5c9a5a" stroke="#4d874b" stroke-width="0.5"/><path d="M4.5 1.8V7.2M1.8 4.5H7.2" stroke="#fff" stroke-width="1.6"/></g>
<!-- scalebar -->
<rect x="7.5" y="406.5" width="21" height="3" rx="1.2" fill="#777" stroke="#555" stroke-width="0.8"/>
<path d="M12 408H15.5M20 408H23.5" stroke="#fff" stroke-width="1"/>
<g transform="translate(21 412.2)"><rect x="0" y="0" width="9" height="9" rx="1.8" fill="#5c9a5a" stroke="#4d874b" stroke-width="0.5"/><path d="M4.5 1.8V7.2M1.8 4.5H7.2" stroke="#fff" stroke-width="1.6"/></g>
<!-- shape -->
<rect x="8.5" y="437.5" width="12" height="9" fill="#c6e4f8" stroke="#7aa0bf"/>
<circle cx="24.5" cy="439.5" r="6" fill="#f7c6c6" stroke="#d98a8a" stroke-width="0.7"/>
<path d="M16.4 428.3L23.4 440.5H10.4Z" fill="#c5f5c5" stroke="#7ec47e" stroke-width="0.8"/>
<g transform="translate(21 442)"><rect x="0" y="0" width="9" height="9" rx="1.8" fill="#5c9a5a" stroke="#4d874b" stroke-width="0.5"/><path d="M4.5 1.8V7.2M1.8 4.5H7.2" stroke="#fff" stroke-width="1.6"/></g>
<path d="M25 447H30L27.5 450Z" fill="#000"/>
<!-- arrow -->
<path d="M9.5 477.5L26 461.5" stroke="#333" stroke-width="1"/>
<path d="M27.5 460L21.5 462L25.5 466Z" fill="#fff" stroke="#333" stroke-width="1"/>
<rect x="8.3" y="476.3" width="2.4" height="2.4" fill="#222"/>
<g transform="translate(21 472)"><rect x="0" y="0" width="9" height="9" rx="1.8" fill="#5c9a5a" stroke="#4d874b" stroke-width="0.5"/><path d="M4.5 1.8V7.2M1.8 4.5H7.2" stroke="#fff" stroke-width="1.6"/></g>
<!-- polyline -->
<path d="M14.3 490L26.4 496M14.3 490L9.4 507" stroke="#111" stroke-width="1"/>
<path d="M9.4 507L26 496.5" stroke="#111" stroke-width="1" stroke-dasharray="1.2 1.2"/>
<circle cx="14.3" cy="490" r="2.2" fill="#2f7ff0"/><circle cx="26.4" cy="496" r="2.2" fill="#2f7ff0"/><circle cx="9.4" cy="507" r="2.2" fill="#2f7ff0"/>
<g transform="translate(21 502)"><rect x="0" y="0" width="9" height="9" rx="1.8" fill="#5c9a5a" stroke="#4d874b" stroke-width="0.5"/><path d="M4.5 1.8V7.2M1.8 4.5H7.2" stroke="#fff" stroke-width="1.6"/></g>
<path d="M25 507H30L27.5 510Z" fill="#000"/>
<!-- html -->
<rect x="8.5" y="519.5" width="19" height="19" fill="#f6f6f6" stroke="#8a8a8a"/>
<path d="M10.5 523H16M10.5 526H15M10.5 529H16M10.5 532H18M10.5 535H19" stroke="#5b8dcc" stroke-width="1.4"/>
<path d="M17 526L14.5 528L17 530M20 530.5L22 524.5M23.5 526L26 528L23.5 530" fill="none" stroke="#222" stroke-width="0.9"/>
<g transform="translate(21 532)"><rect x="0" y="0" width="9" height="9" rx="1.8" fill="#5c9a5a" stroke="#4d874b" stroke-width="0.5"/><path d="M4.5 1.8V7.2M1.8 4.5H7.2" stroke="#fff" stroke-width="1.6"/></g>
<!-- table -->
<rect x="8.5" y="549.5" width="19" height="18.5" fill="#f6f9fd" stroke="#6e9bd1"/>
<rect x="9" y="550" width="18" height="3.5" fill="#a7c6ec"/>
<path d="M11 551.8H16M19 551.8H25M11 556H15M11 559H15M11 562H15M11 565H15M18 556H25M18 559H25M18 562H25M18 565H25" stroke="#5b8dcc" stroke-width="1.1"/>
<g transform="translate(20.5 561.2)"><rect x="0" y="0" width="9" height="9" rx="1.8" fill="#5c9a5a" stroke="#4d874b" stroke-width="0.5"/><path d="M4.5 1.8V7.2M1.8 4.5H7.2" stroke="#fff" stroke-width="1.6"/></g>
</svg>
<!-- splitter strip -->
<div class="a" style="left:1069px;top:84px;width:4px;height:749px;background:#f0f0f0"></div>
<!-- top tabs -->
<div class="a" style="left:1125px;top:104px;width:348px;height:1px;background:#d9d9d9"></div>
<div class="a" style="left:1125px;top:86px;width:83px;height:19px;background:#f0f0f0;border:1px solid #d9d9d9;border-bottom:none"></div>
<div class="a" style="left:1073px;top:84px;width:53px;height:21px;background:#fff;border:1px solid #d9d9d9;border-bottom:none"></div>
<div class="t" style="left:1084px;top:90px">Items</div>
<div class="t" style="left:1135px;top:91px">Undo History</div>
<!-- items dock title -->
<div class="a" style="left:1073px;top:106px;width:400px;height:25px;background:#dadada;border:1px solid #c4c4c4"></div>
<div class="t" style="left:1078px;top:114px">Items</div>

<!-- items list -->
<div class="a" style="left:1073px;top:133px;width:400px;height:185px;background:#fff;border:1px solid #828790"></div>
<div class="a" style="left:1112px;top:134px;width:1px;height:24px;background:#e5e5e5"></div>
<div class="a" style="left:1151px;top:134px;width:1px;height:24px;background:#e5e5e5"></div>
<svg style="left:0;top:0" width="1473" height="200" viewBox="0 0 1473 200">
<path d="M1078.5 146.5C1082 141 1091 141 1094.5 146.5C1091 151.5 1082 151.5 1078.5 146.5Z" fill="#f4f4f4" stroke="#999" stroke-width="0.8"/>
<circle cx="1086" cy="146.5" r="3.3" fill="#8a8a8a" stroke="#666" stroke-width="0.6"/>
<circle cx="1085.5" cy="146" r="1.1" fill="#111"/>
<path d="M1121 146V143C1121 138.5 1129 138.5 1129 143V146" fill="none" stroke="#666" stroke-width="1.6"/>
<path d="M1121 146V143C1121 138.5 1129 138.5 1129 143V146" fill="none" stroke="#eee" stroke-width="0.5"/>
<rect x="1119" y="145.5" width="12" height="8.5" rx="1.5" fill="#666"/>
</svg>
<div class="t" style="left:1155px;top:140px">Item</div>

<!-- bottom tabs -->
<div class="a" style="left:1073px;top:342px;width:400px;height:1px;background:#d9d9d9"></div>
<div class="a" style="left:1075px;top:324px;width:54px;height:19px;background:#f0f0f0;border:1px solid #d9d9d9;border-bottom:none"></div>
<div class="a" style="left:1229px;top:324px;width:52px;height:19px;background:#f0f0f0;border:1px solid #d9d9d9;border-bottom:none"></div>
<div class="a" style="left:1128px;top:322px;width:102px;height:21px;background:#fff;border:1px solid #d9d9d9;border-bottom:none"></div>
<div class="t" style="left:1084px;top:329px">Layout</div>
<div class="t" style="left:1141px;top:328px">Item Properties</div>
<div class="t" style="left:1239px;top:329px">Guides</div>
<!-- item properties dock title -->
<div class="a" style="left:1073px;top:344px;width:400px;height:25px;background:#dadada;border:1px solid #c4c4c4"></div>
<div class="t" style="left:1078px;top:352px">Item Properties</div>

<!-- group box -->
<div class="a" style="left:1082px;top:386px;width:382px;height:148px;border:1px solid #dcdcdc"></div>
<div class="a" style="left:1088px;top:380px;width:62px;height:12px;background:#f0f0f0"></div>
<div class="t" style="left:1091px;top:382px;font-weight:bold">Page Size</div>

<div class="t" style="left:1091px;top:412px">Size</div>
<div class="t" style="left:1091px;top:444px">Orientation</div>
<div class="t" style="left:1091px;top:476px">Width</div>
<div class="t" style="left:1091px;top:508px">Height</div>

<div class="a" style="left:1152px;top:406px;width:266px;height:20px;background:#e1e1e1;border:1px solid #adadad"></div>
<div class="t" style="left:1155px;top:412px">A4</div>
<div class="a" style="left:1152px;top:438px;width:266px;height:20px;background:#e1e1e1;border:1px solid #adadad"></div>
<div class="t" style="left:1155px;top:444px">Landscape</div>
<div class="a" style="left:1152px;top:470px;width:183px;height:20px;background:#fff;border:1px solid #7a7a7a"></div>
<div class="t" style="left:1155px;top:476px">297,000</div>
<div class="a" style="left:1152px;top:502px;width:183px;height:20px;background:#fff;border:1px solid #7a7a7a"></div>
<div class="t" style="left:1155px;top:508px">210,000</div>

<svg style="left:0;top:0" width="1473" height="620" viewBox="0 0 1473 620">

<g transform="translate(1405 414.5)"><path d="M0 0L4 4L8 0" fill="none" stroke="#404040" stroke-width="1"/></g>
<g transform="translate(1405 446.5)"><path d="M0 0L4 4L8 0" fill="none" stroke="#404040" stroke-width="1"/></g>
<g transform="translate(1319 471)"><rect x="0.5" y="0.5" width="13" height="17" fill="#f0f0f0" stroke="#c9c9c9"/><path d="M0.5 9H13.5" stroke="#c9c9c9"/><path d="M4.5 6L7 3.5L9.5 6Z M4.5 11.5L7 14L9.5 11.5Z" fill="#000"/></g>
<g transform="translate(1319 503)"><rect x="0.5" y="0.5" width="13" height="17" fill="#f0f0f0" stroke="#c9c9c9"/><path d="M0.5 9H13.5" stroke="#c9c9c9"/><path d="M4.5 6L7 3.5L9.5 6Z M4.5 11.5L7 14L9.5 11.5Z" fill="#000"/></g>
<g transform="translate(1420 400)">
<path d="M7.1 15.6L12.2 9.7V21.5Z" fill="#999" stroke="#888" stroke-width="0.5"/>
<rect x="12.5" y="8.3" width="12" height="15.2" fill="#fff" stroke="#858580" stroke-width="0.9"/>
<path d="M12.5 15.4H24.5" stroke="#858580" stroke-width="0.9"/>
<path d="M15 11.9H22.5" stroke="#444" stroke-width="1.4"/>
<path d="M15 19.5H21" stroke="#555" stroke-width="0.8"/>
<path d="M21 18H30.2L25.6 23Z" fill="#000"/>
</g>
<g transform="translate(1420 432)">
<path d="M7.1 15.6L12.2 9.7V21.5Z" fill="#999" stroke="#888" stroke-width="0.5"/>
<rect x="12.5" y="8.3" width="12" height="15.2" fill="#fff" stroke="#858580" stroke-width="0.9"/>
<path d="M12.5 15.4H24.5" stroke="#858580" stroke-width="0.9"/>
<path d="M15 11.9H22.5" stroke="#444" stroke-width="1.4"/>
<path d="M15 19.5H21" stroke="#555" stroke-width="0.8"/>
<path d="M21 18H30.2L25.6 23Z" fill="#000"/>
</g>
<g transform="translate(1337 464)">
<path d="M7.1 15.6L12.2 9.7V21.5Z" fill="#999" stroke="#888" stroke-width="0.5"/>
<rect x="12.5" y="8.3" width="12" height="15.2" fill="#fff" stroke="#858580" stroke-width="0.9"/>
<path d="M12.5 15.4H24.5" stroke="#858580" stroke-width="0.9"/>
<path d="M15 11.9H22.5" stroke="#444" stroke-width="1.4"/>
<path d="M15 19.5H21" stroke="#555" stroke-width="0.8"/>
<path d="M21 18H30.2L25.6 23Z" fill="#000"/>
</g>
<g transform="translate(1337 496)">
<path d="M7.1 15.6L12.2 9.7V21.5Z" fill="#999" stroke="#888" stroke-width="0.5"/>
<rect x="12.5" y="8.3" width="12" height="15.2" fill="#fff" stroke="#858580" stroke-width="0.9"/>
<path d="M12.5 15.4H24.5" stroke="#858580" stroke-width="0.9"/>
<path d="M15 11.9H22.5" stroke="#444" stroke-width="1.4"/>
<path d="M15 19.5H21" stroke="#555" stroke-width="0.8"/>
<path d="M21 18H30.2L25.6 23Z" fill="#000"/>
</g>
<g transform="translate(1236 538)">
<path d="M7.1 15.6L12.2 9.7V21.5Z" fill="#999" stroke="#888" stroke-width="0.5"/>
<rect x="12.5" y="8.3" width="12" height="15.2" fill="#fff" stroke="#858580" stroke-width="0.9"/>
<path d="M12.5 15.4H24.5" stroke="#858580" stroke-width="0.9"/>
<path d="M15 11.9H22.5" stroke="#444" stroke-width="1.4"/>
<path d="M15 19.5H21" stroke="#555" stroke-width="0.8"/>
<path d="M21 18H30.2L25.6 23Z" fill="#000"/>
</g>
<!-- lock bracket -->
<path d="M1384 473.5H1391.5V481M1384 518.5H1391.5V511" fill="none" stroke="#d2d2d2" stroke-width="1.8"/>
<path d="M1387.5 493V491C1387.5 486.5 1394.5 486.5 1394.5 490.5" fill="none" stroke="#d0d0d0" stroke-width="1.3"/>
<rect x="1385" y="492.5" width="12" height="10.5" rx="2" fill="#d4d4d4"/>
</svg>
<!-- mm combo -->
<div class="a" style="left:1409px;top:486px;width:45px;height:20px;background:#cccccc;border:1px solid #bfbfbf"></div>
<div class="t" style="left:1412px;top:492px;color:#838383">mm</div>
<svg style="left:1441px;top:494px" width="9" height="5"><path d="M0.5 0.5L4.5 4.5L8.5 0.5" fill="none" stroke="#a8a8a8"/></svg>

<!-- exclude checkbox -->
<div class="a" style="left:1082px;top:547px;width:13px;height:13px;background:#fff;border:1px solid #333"></div>
<div class="t" style="left:1099px;top:549px">Exclude page from exports</div>
<div class="t" style="left:1082px;top:582px">Background</div>
<div class="a" style="left:1145px;top:574px;width:318px;height:25px;background:#fff;border:1px solid #adadad"></div>
<div class="a" style="left:1146px;top:575px;width:3px;height:23px;background:#e0e0e0"></div>
<div class="a" style="left:1447px;top:575px;width:3px;height:23px;background:#e6e6e6"></div>
<div class="a" style="left:1450px;top:576px;width:1px;height:21px;background:#8a8a8a"></div>
<div class="a" style="left:1451px;top:575px;width:11px;height:23px;background:#e1e1e1"></div>
<svg style="left:1453px;top:585px" width="8" height="5"><path d="M0 0H7L3.5 4Z" fill="#000"/></svg>

<svg style="left:0;top:0" width="1473" height="400" viewBox="0 0 1473 400">
<path d="M1437.5 111.8H1446V120.2H1443.2M1437.5 111.8V114.5" fill="none" stroke="#333" stroke-width="1.6"/>
<rect x="1435" y="115.5" width="8" height="9" fill="none" stroke="#333" stroke-width="1.6"/>
<path d="M1435 116.3H1443" stroke="#333" stroke-width="2.4"/>
<path d="M1438 112.6H1446" stroke="#333" stroke-width="2.4"/>
<path d="M1455.5 113.5L1466.5 124.5M1466.5 113.5L1455.5 124.5" stroke="#333" stroke-width="2.2"/>
<path d="M1437.5 350.8H1446V359.2H1443.2M1437.5 350.8V353.5" fill="none" stroke="#333" stroke-width="1.6"/>
<rect x="1435" y="354.5" width="8" height="9" fill="none" stroke="#333" stroke-width="1.6"/>
<path d="M1435 355.3H1443" stroke="#333" stroke-width="2.4"/>
<path d="M1438 351.6H1446" stroke="#333" stroke-width="2.4"/>
<path d="M1455.5 351.5L1466.5 362.5M1466.5 351.5L1455.5 362.5" stroke="#333" stroke-width="2.2"/>
</svg>
<div class="t" style="left:924px;top:844px">x: 301.771 mm</div>
<div class="t" style="left:1030px;top:844px">y: 60.0901 mm</div>
<div class="t" style="left:1136px;top:844px">page: 1</div>
<div class="a" style="left:1242px;top:838px;width:105px;height:20px;background:#fff;border:1px solid #7a7a7a"></div>
<div class="t" style="left:1246px;top:844px;font-size:11.5px">80.1%</div>
<svg style="left:1334px;top:846px" width="10" height="6"><path d="M0.5 0.5L4.5 4.5L8.5 0.5" fill="none" stroke="#404040" stroke-width="1"/></svg>
<div class="a" style="left:1353px;top:845px;width:100px;height:4px;background:#e7eaea;border:1px solid #d6d6d6"></div>
<div class="a" style="left:1360px;top:837px;width:10px;height:21px;background:#0078d7"></div>
<div class="a" style="left:0;top:860px;width:1473px;height:1px;background:#fff"></div>
<div class="a" style="left:0;top:861px;width:1473px;height:1px;background:#707070"></div>
<div class="a" style="left:0;top:862px;width:1473px;height:1px;background:#cfcfcf"></div>
<div class="a" style="left:519px;top:862px;width:29px;height:1px;background:#dedede"></div>
<div class="a" style="left:548px;top:861px;width:161px;height:1px;background:#5a6570"></div>
<div class="a" style="left:548px;top:862px;width:161px;height:1px;background:#8f9ba6"></div>
<div class="a" style="left:0;top:861px;width:519px;height:2px;background:#13243a"></div>
<svg style="left:1462px;top:850px" width="10" height="10"><g fill="#b4b4b4"><rect x="7" y="1" width="2" height="2"/><rect x="4" y="4" width="2" height="2"/><rect x="7" y="4" width="2" height="2"/><rect x="1" y="7" width="2" height="2"/><rect x="4" y="7" width="2" height="2"/><rect x="7" y="7" width="2" height="2"/></g></svg>
<div class="a" style="left:0;top:0;width:1px;height:863px;background:#1b2b3c"></div>
</body></html>
